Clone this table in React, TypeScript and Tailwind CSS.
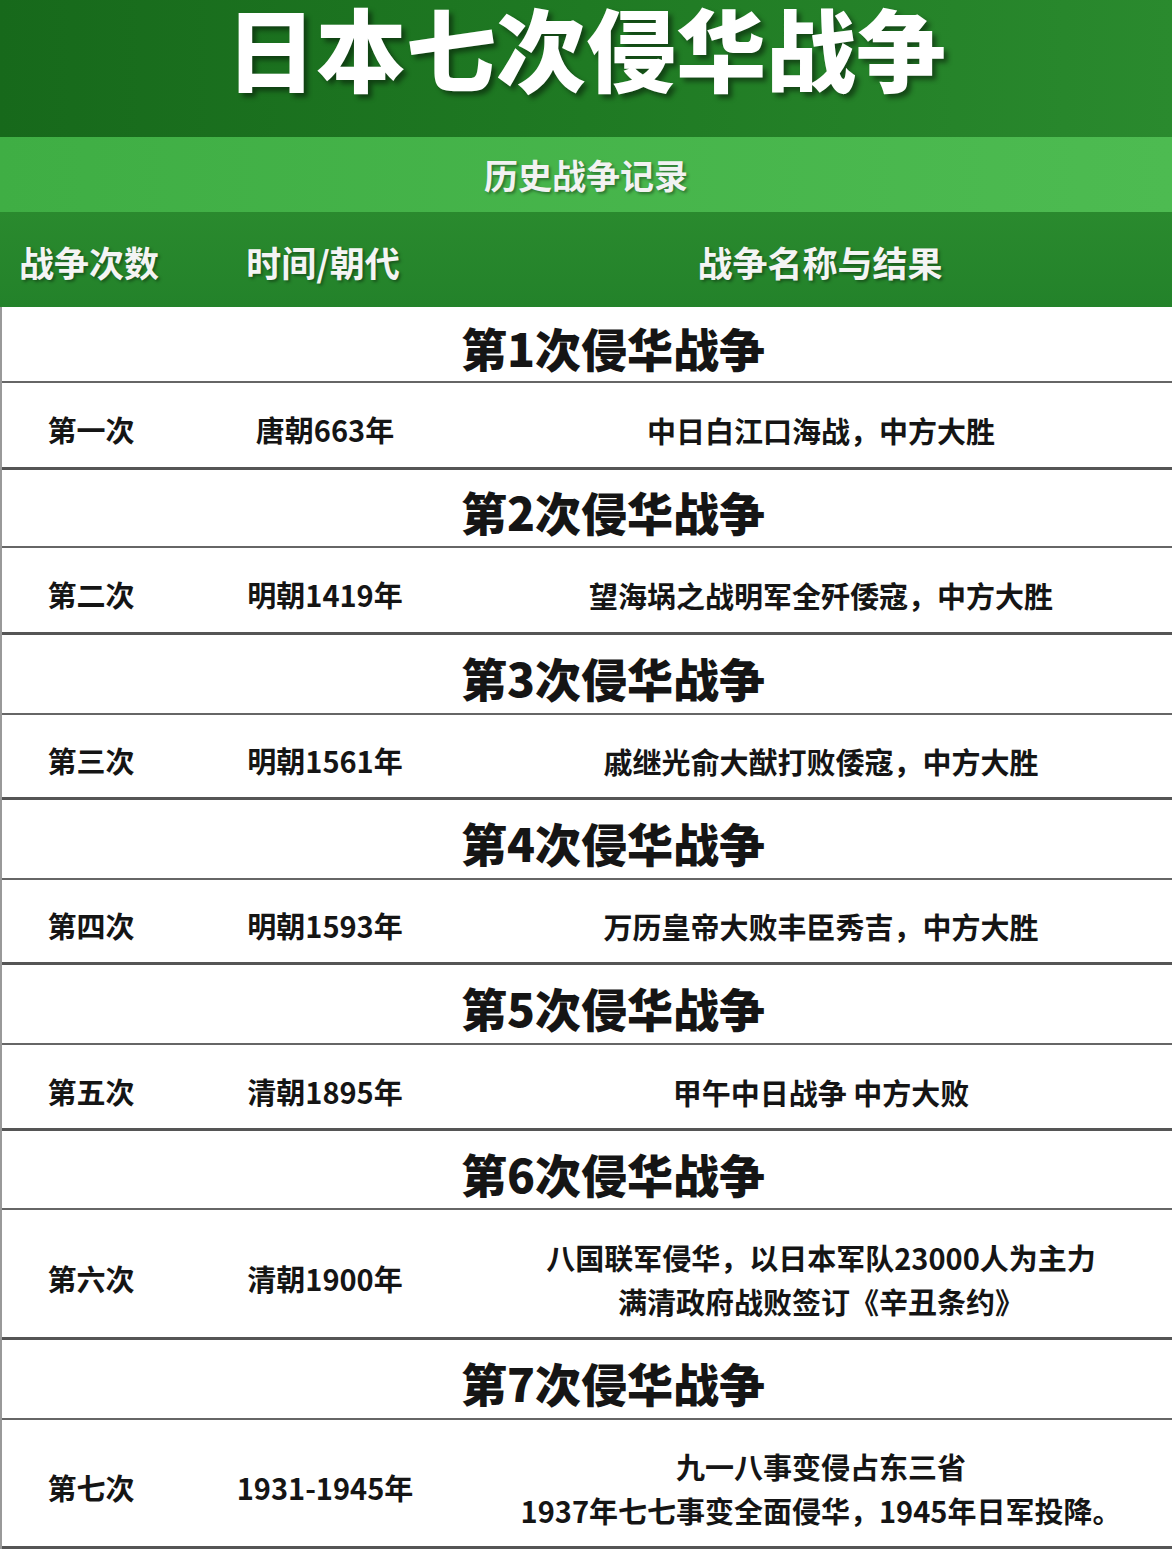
const font = { fontFamily: '"Noto Sans CJK SC", "Noto Sans", sans-serif' };
const titleFont = { fontFamily: '"Liberation Sans", "Noto Sans CJK SC", sans-serif' };

type War = {
  title: string;
  order: string;
  era: string;
  result: string[];
  sectionH: string;
  rowH: string;
};

const wars: War[] = [
  { title: "第1次侵华战争", order: "第一次", era: "唐朝663年", result: ["中日白江口海战，中方大胜"], sectionH: "h-[76px]", rowH: "h-[87px]" },
  { title: "第2次侵华战争", order: "第二次", era: "明朝1419年", result: ["望海埚之战明军全歼倭寇，中方大胜"], sectionH: "h-[78px]", rowH: "h-[87px]" },
  { title: "第3次侵华战争", order: "第三次", era: "明朝1561年", result: ["戚继光俞大猷打败倭寇，中方大胜"], sectionH: "h-[80px]", rowH: "h-[85px]" },
  { title: "第4次侵华战争", order: "第四次", era: "明朝1593年", result: ["万历皇帝大败丰臣秀吉，中方大胜"], sectionH: "h-[80px]", rowH: "h-[85px]" },
  { title: "第5次侵华战争", order: "第五次", era: "清朝1895年", result: ["甲午中日战争 中方大败"], sectionH: "h-[80px]", rowH: "h-[86px]" },
  { title: "第6次侵华战争", order: "第六次", era: "清朝1900年", result: ["八国联军侵华，以日本军队23000人为主力", "满清政府战败签订《辛丑条约》"], sectionH: "h-[79px]", rowH: "h-[130px]" },
  { title: "第7次侵华战争", order: "第七次", era: "1931-1945年", result: ["九一八事变侵占东三省", "1937年七七事变全面侵华，1945年日军投降。"], sectionH: "h-[80px]", rowH: "h-[129px]" },
];

export default function App() {
  return (
    <div className="w-[1172px] h-[1549px] overflow-hidden bg-white" style={font}>
      <div className="h-[137px] flex items-center justify-center pb-[30px] bg-gradient-to-r from-[#17691b] via-[#1f7a23] to-[#2a8a2e]">
        <h1 className="text-[90px] leading-none font-black text-white [text-shadow:4px_4px_5px_rgba(0,0,0,0.45)]" style={titleFont}>
          日本七次侵华战争
        </h1>
      </div>
      <div className="h-[75px] flex items-center justify-center bg-gradient-to-r from-[#3fae44] to-[#4dbb51]">
        <span className="text-[34px] font-bold text-[#f2f2f2] [text-shadow:2px_2px_3px_rgba(0,0,0,0.35)]">历史战争记录</span>
      </div>
      <div className="h-[95px] grid grid-cols-[178px_290px_1fr] items-center bg-gradient-to-b from-[#2a8a2e] to-[#23822a] text-[35px] font-bold text-[#f4f4f4] [text-shadow:2px_2px_3px_rgba(0,0,0,0.35)] pt-[6px]">
        <span className="text-center">战争次数</span>
        <span className="text-center">时间/朝代</span>
        <span className="text-center">战争名称与结果</span>
      </div>
      <div className="border-l-2 border-[#999] text-[#151515]">
        {wars.map((w) => (
          <div key={w.order}>
            <div className={`${w.sectionH} flex items-center justify-center pl-[52px] pt-[6px] border-b-2 border-[#666]`}>
              <span className="text-[46px] font-black leading-none">{w.title}</span>
            </div>
            <div className={`${w.rowH} grid grid-cols-[178px_290px_1fr] items-center pt-[10px] border-b-[3px] border-[#555] text-[29px] font-bold`}>
              <span className="text-center">{w.order}</span>
              <span className="text-center">{w.era}</span>
              <div className="flex flex-col items-center leading-[44px]">
                {w.result.map((r) => (
                  <span key={r}>{r}</span>
                ))}
              </div>
            </div>
          </div>
        ))}
      </div>
    </div>
  );
}
